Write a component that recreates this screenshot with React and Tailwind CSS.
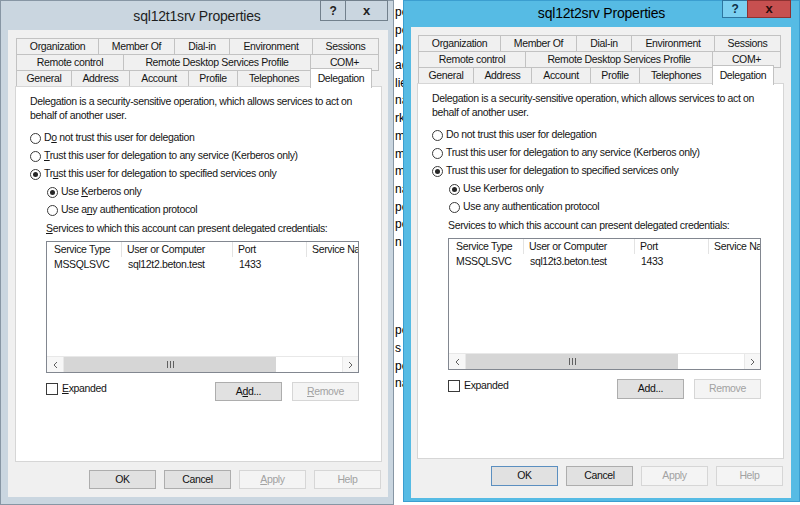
import React from "react";

const FONT = "font-['Liberation_Sans',Arial,sans-serif]";

const ROW1 = [
  ["Organization", "w-[83px]"],
  ["Member Of", "w-[76px]"],
  ["Dial-in", "w-[55px]"],
  ["Environment", "w-[83px]"],
  ["Sessions", "w-[66px]"],
];
const ROW2 = [
  ["Remote control", "w-[108px]"],
  ["Remote Desktop Services Profile", "w-[187px]"],
  ["COM+", "w-[68px]"],
];
const ROW3 = [
  ["General", "w-[56px]"],
  ["Address", "w-[58px]"],
  ["Account", "w-[59px]"],
  ["Profile", "w-[49px]"],
  ["Telephones", "w-[73px]"],
];

// bits of the window lying behind both dialogs
const BG_WORDS = ["pe", "pe", "pe", "ad", "lie", "na", "rk", "m", "m", "m", "na", "pe", "pe", "n", "", "", "", "", "pe", "s", "pe", "na"];

function Ak({ on, children }) {
  return on ? <span className="underline underline-offset-[1px]">{children}</span> : children;
}

function Tab({ label, w }) {
  return (
    <div className={`${w} h-[17px] shrink-0 flex items-center justify-center bg-[#f0f0f0] border-t border-b border-r first:border-l border-[#c2c2c2] whitespace-nowrap`}>
      {label}
    </div>
  );
}

function Radio({ checked, indent, children }) {
  return (
    <div className={`flex items-center h-[18px] gap-[3px] ${indent ? "pl-[17px]" : ""}`}>
      <span className="w-[11px] h-[11px] rounded-full border border-[#3a3a3a] bg-white flex items-center justify-center shrink-0">
        {checked && <span className="w-[5px] h-[5px] rounded-full bg-[#262626]" />}
      </span>
      <span>{children}</span>
    </div>
  );
}

function Btn({ children, disabled, def, tall }) {
  const tone = disabled
    ? "bg-[#f4f4f4] border-[#d6d6d6] text-[#a2a2a2]"
    : def
    ? "bg-[#e1e1e1] border-[#5b8fc0] text-[#111]"
    : "bg-[#e1e1e1] border-[#adadad] text-[#111]";
  return (
    <div className={`w-[67px] ${tall ? "h-[20px]" : "h-[19px]"} flex items-center justify-center border ${tone}`}>
      {children}
    </div>
  );
}

function Chevron({ right }) {
  return (
    <svg width="5" height="8" viewBox="0 0 5 8">
      <path d={right ? "M1 1 L4 4 L1 7" : "M4 1 L1 4 L4 7"} fill="none" stroke="#606060" strokeWidth="1" />
    </svg>
  );
}

function Dialog({ title, host, active }) {
  const keys = !active;
  return (
    <div
      className={`flex flex-col shrink-0 border ${
        active ? "w-[397px] h-[502px] bg-[#56bbe4] border-[#3b9ed0]" : "w-[394px] h-[505px] bg-[#cad6e0] border-[#8796a4]"
      }`}
    >
      {/* title bar */}
      <div className={`grid grid-cols-[1fr_auto_1fr] shrink-0 ${active ? "h-[26px]" : "h-[29px]"}`}>
        <div />
        <div className={`self-center text-[14px] tracking-[-0.2px] ${active ? "text-black pb-[1px]" : "text-[#1e1e1e] pt-[1px]"}`}>
          {title}
        </div>
        <div className={`flex justify-end items-start -mt-px ${active ? "pr-[8px]" : "pr-[5px]"}`}>
          <div
            className={`w-[26px] flex items-center justify-center font-bold text-[12px] border ${
              active ? "h-[18px] bg-[#7bd0f1] border-[#2d76a0] text-[#10324a]" : "h-[21px] bg-[#cad6e0] border-[#72808c] text-[#222]"
            }`}
          >
            ?
          </div>
          <div
            className={`-ml-px flex items-center justify-center font-bold text-[13px] border ${
              active ? "w-[44px] h-[18px] bg-[#c75050] border-[#8d3232] text-[#2a0c0c]" : "w-[43px] h-[21px] bg-[#cad6e0] border-[#72808c] text-[#222]"
            }`}
          >
            x
          </div>
        </div>
      </div>

      {/* client area */}
      <div
        className={`flex-1 bg-[#f0f0f0] pt-[8px] flex flex-col ${
          active ? "ml-[7px] mr-[8px] mb-[3px] pl-[6px] pr-[7px]" : "ml-[7px] mr-[5px] mb-[7px] pl-[7px] pr-[6px]"
        }`}
      >
        {/* tabs */}
        <div className="ml-[1px] flex flex-col">
          <div className="flex">
            {ROW1.map(([l, w]) => (
              <Tab key={l} label={l} w={w} />
            ))}
          </div>
          <div className="flex -mt-px">
            {ROW2.map(([l, w]) => (
              <Tab key={l} label={l} w={w} />
            ))}
          </div>
          <div className="flex items-end -mt-[3px]">
            {ROW3.map(([l, w]) => (
              <Tab key={l} label={l} w={w} />
            ))}
            <div className="relative z-10 -ml-px -mb-px w-[62px] h-[20px] bg-white border-t border-l border-r border-[#c2c2c2] flex items-center justify-center">
              Delegation
            </div>
          </div>
        </div>

        {/* delegation page */}
        <div className="-mt-px h-[376px] bg-white border border-[#d6d6d6] pt-[7px] pl-[14px] flex flex-col">
          <div className="leading-[14px]">
            Delegation is a security-sensitive operation, which allows services to act on
            <br />
            behalf of another user.
          </div>
          <div className="mt-[7px] flex flex-col">
            <Radio>
              D<Ak on={keys}>o</Ak> not trust this user for delegation
            </Radio>
            <Radio>
              <Ak on={keys}>T</Ak>rust this user for delegation to any service (Kerberos only)
            </Radio>
            <Radio checked>
              Tr<Ak on={keys}>u</Ak>st this user for delegation to specified services only
            </Radio>
            <Radio checked indent>
              Use <Ak on={keys}>K</Ak>erberos only
            </Radio>
            <Radio indent>
              Use a<Ak on={keys}>n</Ak>y authentication protocol
            </Radio>
          </div>
          <div className="ml-[16px] mt-[2px] h-[16px] flex items-center">
            <span>
              <Ak on={keys}>S</Ak>ervices to which this account can present delegated credentials:
            </span>
          </div>

          {/* services list */}
          <div className="ml-[16px] mt-[4px] w-[313px] h-[132px] border border-[#828790] bg-white flex flex-col">
            <div className="flex h-[15px] shrink-0 whitespace-nowrap">
              <div className="w-[75px] pl-[7px] border-r border-[#e3e3e3] flex items-center">Service Type</div>
              <div className="w-[111px] pl-[5px] border-r border-[#e3e3e3] flex items-center">User or Computer</div>
              <div className="w-[74px] pl-[5px] border-r border-[#e3e3e3] flex items-center">Port</div>
              <div className="flex-1 pl-[5px] overflow-hidden flex items-center">Service Name</div>
            </div>
            <div className="flex h-[16px] shrink-0 whitespace-nowrap">
              <div className="w-[75px] pl-[7px] flex items-center">MSSQLSVC</div>
              <div className="w-[111px] pl-[6px] flex items-center">{host}</div>
              <div className="w-[74px] pl-[6px] flex items-center">1433</div>
            </div>
            <div className="flex-1" />
            <div className="h-[16px] shrink-0 flex border-t border-[#e8e8e8] bg-[#f7f7f7]">
              <div className="w-[17px] flex items-center justify-center border-r border-[#e8e8e8]">
                <Chevron />
              </div>
              <div className="w-[212px] bg-[#d6d6d6] flex items-center justify-center gap-[2px]">
                <span className="w-px h-[7px] bg-[#606060]" />
                <span className="w-px h-[7px] bg-[#606060]" />
                <span className="w-px h-[7px] bg-[#606060]" />
              </div>
              <div className="flex-1 bg-white" />
              <div className="w-[16px] flex items-center justify-center border-l border-[#e8e8e8]">
                <Chevron right />
              </div>
            </div>
          </div>

          <div className="ml-[16px] mt-[9px] w-[313px] flex items-start">
            <div className="flex items-center gap-[4px] h-[13px]">
              <span className="w-[12px] h-[12px] border border-[#3a3a3a] bg-white" />
              <span>
                <Ak on={keys}>E</Ak>xpanded
              </span>
            </div>
            <div className="flex-1" />
            <div className="flex gap-[10px]">
              <Btn tall={active}>
                A<Ak on={keys}>d</Ak>d...
              </Btn>
              <Btn tall={active} disabled>
                <Ak on={keys}>R</Ak>emove
              </Btn>
            </div>
          </div>
        </div>

        {/* dialog buttons */}
        <div className={`flex justify-end gap-[8px] mr-[1px] ${active ? "mt-[7px]" : "mt-[8px]"}`}>
          <Btn tall={active} def={active}>OK</Btn>
          <Btn tall={active}>Cancel</Btn>
          <Btn tall={active} disabled>
            <Ak on={keys}>A</Ak>pply
          </Btn>
          <Btn tall={active} disabled>Help</Btn>
        </div>
      </div>
    </div>
  );
}

export default function App() {
  return (
    <div className={`w-[800px] h-[505px] bg-white flex overflow-hidden text-[10.5px] tracking-[-0.35px] text-[#151515] ${FONT}`}>
      <Dialog title="sql12t1srv Properties" host="sql12t2.beton.test" />
      <div className="w-[9px] h-[505px] overflow-hidden shrink-0 pt-[4px] pl-[1px] text-[12px] tracking-normal leading-[17.7px] text-black">
        {BG_WORDS.map((w, i) => (
          <div key={i} className="h-[17.7px] whitespace-nowrap">
            {w}
          </div>
        ))}
      </div>
      <Dialog title="sql12t2srv Properties" host="sql12t3.beton.test" active />
    </div>
  );
}
